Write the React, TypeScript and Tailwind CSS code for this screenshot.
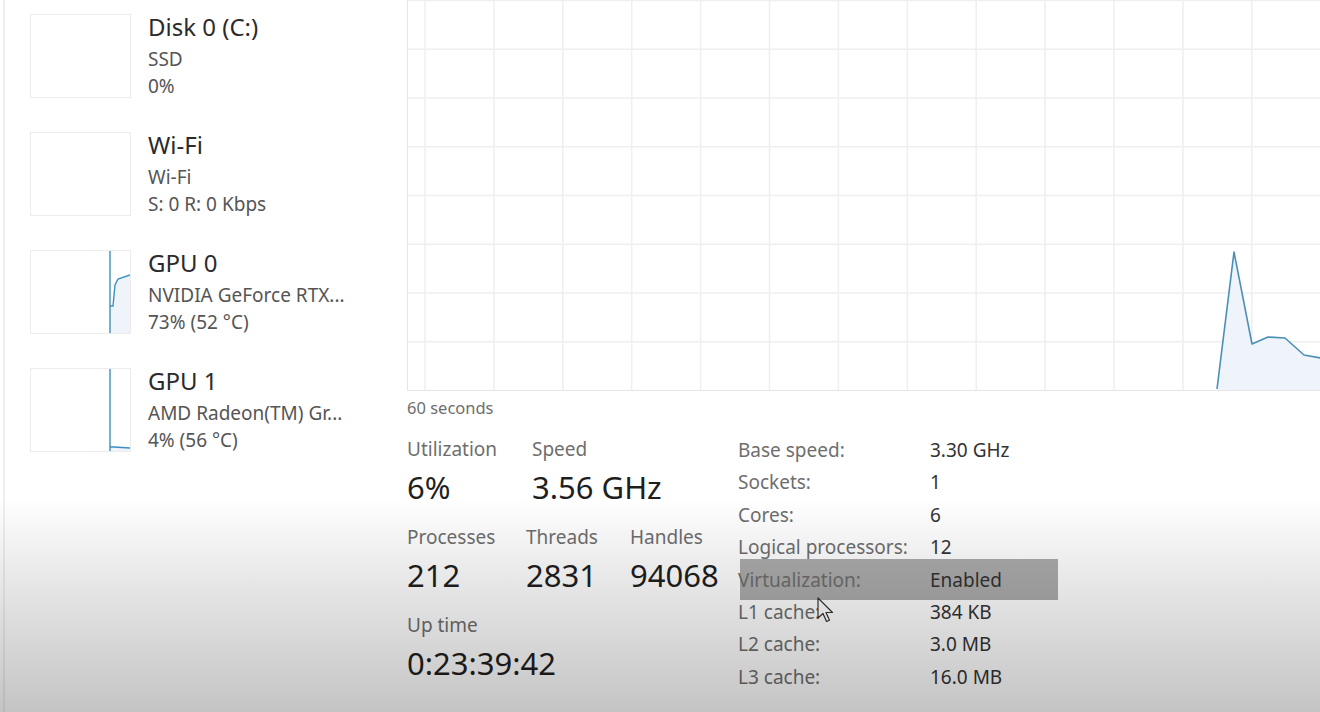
import React from "react";

const font = { fontFamily: '"Noto Sans", "Open Sans", sans-serif' };

type Dev = { name: string; sub: string; stat: string; spark?: "gpu0" | "gpu1" };

const devices: Dev[] = [
  { name: "Disk 0 (C:)", sub: "SSD", stat: "0%" },
  { name: "Wi-Fi", sub: "Wi-Fi", stat: "S: 0 R: 0 Kbps" },
  { name: "GPU 0", sub: "NVIDIA GeForce RTX...", stat: "73% (52 °C)", spark: "gpu0" },
  { name: "GPU 1", sub: "AMD Radeon(TM) Gr...", stat: "4% (56 °C)", spark: "gpu1" },
];

function Thumb({ spark }: { spark?: "gpu0" | "gpu1" }) {
  return (
    <div className="w-[101px] h-[84px] border border-[#ececec] bg-white shrink-0">
      {spark && (
        <svg width="99" height="82" viewBox="0 0 99 82" className="block">
          {spark === "gpu0" ? (
            <>
              <path d="M79 82 L79 55 L82 55 L84 34 L87 28 L99 24 L99 82 Z" fill="#eef4fa" />
              <path d="M79 0 L79 82 M79 55 L82 55 L84 34 L87 28 L99 24" fill="none" stroke="#3d8fc0" strokeWidth="1.4" />
            </>
          ) : (
            <>
              <path d="M79 82 L79 78 L99 79 L99 82 Z" fill="#eef4fa" />
              <path d="M79 0 L79 82 M79 78 L83 78 L99 79" fill="none" stroke="#3d8fc0" strokeWidth="1.4" />
            </>
          )}
        </svg>
      )}
    </div>
  );
}

function Graph() {
  const vx = Array.from({ length: 14 }, (_, i) => 17 + i * 68.9);
  const hy = Array.from({ length: 8 }, (_, i) => 0.5 + i * 48.75);
  const pts = [
    [809, 389],
    [826, 252],
    [844, 344],
    [860, 337],
    [877, 338],
    [896, 355],
    [913, 358],
  ];
  const line = pts.map((p, i) => `${i ? "L" : "M"}${p[0]} ${p[1]}`).join(" ");
  return (
    <div className="h-[391px] border-l border-b border-[#e6e6e6] bg-white">
      <svg width="913" height="390" viewBox="0 0 913 390" className="block">
        {vx.map((x) => (
          <line key={x} x1={x} y1={0} x2={x} y2={390} stroke="#efefef" strokeWidth="1.5" />
        ))}
        {hy.map((y) => (
          <line key={y} x1={0} y1={y} x2={913} y2={y} stroke="#efefef" strokeWidth="1.5" />
        ))}
        <path d={`${line} L913 390 L809 390 Z`} fill="#eef4fa" />
        <path d={line} fill="none" stroke="#4a8fb8" strokeWidth="1.6" strokeLinejoin="round" />
      </svg>
    </div>
  );
}

function Stat({ label, value, w }: { label: string; value: string; w: string }) {
  return (
    <div className={w}>
      <div className="text-[19px] leading-[26px] text-[#6e6e6e]">{label}</div>
      <div className="text-[31px] leading-[42px] text-[#1f1f1f] mt-[4px]">{value}</div>
    </div>
  );
}

const details: [string, string][] = [
  ["Base speed:", "3.30 GHz"],
  ["Sockets:", "1"],
  ["Cores:", "6"],
  ["Logical processors:", "12"],
  ["Virtualization:", "Enabled"],
  ["L1 cache:", "384 KB"],
  ["L2 cache:", "3.0 MB"],
  ["L3 cache:", "16.0 MB"],
];

export default function App() {
  return (
    <div style={font} className="relative w-[1320px] h-[712px] overflow-hidden bg-white flex">
      {/* left list */}
      <div className="w-[407px] shrink-0 pl-[3px]">
        <div className="h-full border-l-2 border-[#efefef] pl-[25px] pt-[14px] flex flex-col gap-[34px]">
          {devices.map((d) => (
            <div key={d.name} className="flex gap-[17px] h-[84px]">
              <Thumb spark={d.spark} />
              <div className="-mt-[3px]">
                <div className="text-[24px] leading-[32px] text-[#2b2b2b]">{d.name}</div>
                <div className="text-[19px] leading-[27px] mt-[3px] text-[#555]">{d.sub}</div>
                <div className="text-[19px] leading-[27px] text-[#555]">{d.stat}</div>
              </div>
            </div>
          ))}
        </div>
      </div>

      {/* performance pane */}
      <div className="flex-1 flex flex-col">
        <Graph />
        <div className="text-[16.5px] leading-[20px] text-[#6e6e6e] mt-[7px]">60 seconds</div>
        <div className="flex mt-[18px]">
          <div className="w-[331px] shrink-0 flex flex-col gap-[16px]">
            <div className="flex">
              <Stat label="Utilization" value="6%" w="w-[125px]" />
              <Stat label="Speed" value="3.56 GHz" w="w-[180px]" />
            </div>
            <div className="flex">
              <Stat label="Processes" value="212" w="w-[119px]" />
              <Stat label="Threads" value="2831" w="w-[104px]" />
              <Stat label="Handles" value="94068" w="w-[100px]" />
            </div>
            <Stat label="Up time" value="0:23:39:42" w="w-[200px]" />
          </div>
          <div className="flex flex-col -mt-[2px]">
            {details.map(([k, v]) => (
              <div key={k} className="relative flex h-[32.4px] items-center text-[19px]">
                {k === "Virtualization:" && (
                  <div className="absolute left-[2px] w-[318px] -top-[5px] -bottom-[4px] bg-[#acacac]" />
                )}
                <div className="relative w-[192px] text-[#6e6e6e]">{k}</div>
                <div className="relative text-[#333]">{v}</div>
              </div>
            ))}
          </div>
        </div>
      </div>

      {/* cursor */}
      <svg className="absolute left-[817px] top-[597px]" width="18" height="28" viewBox="0 0 18 28">
        <path
          d="M1 1 L1 21 L6 16.5 L9.5 24.5 L12.5 23.2 L9 15.5 L15.5 15.5 Z"
          fill="#fff"
          stroke="#333"
          strokeWidth="1.2"
          strokeLinejoin="round"
        />
      </svg>

      {/* video vignette */}
      <div className="pointer-events-none absolute inset-0 bg-[linear-gradient(to_bottom,transparent_70%,rgba(0,0,0,0.075)_79%,rgba(0,0,0,0.23)_100%)]" />
    </div>
  );
}
